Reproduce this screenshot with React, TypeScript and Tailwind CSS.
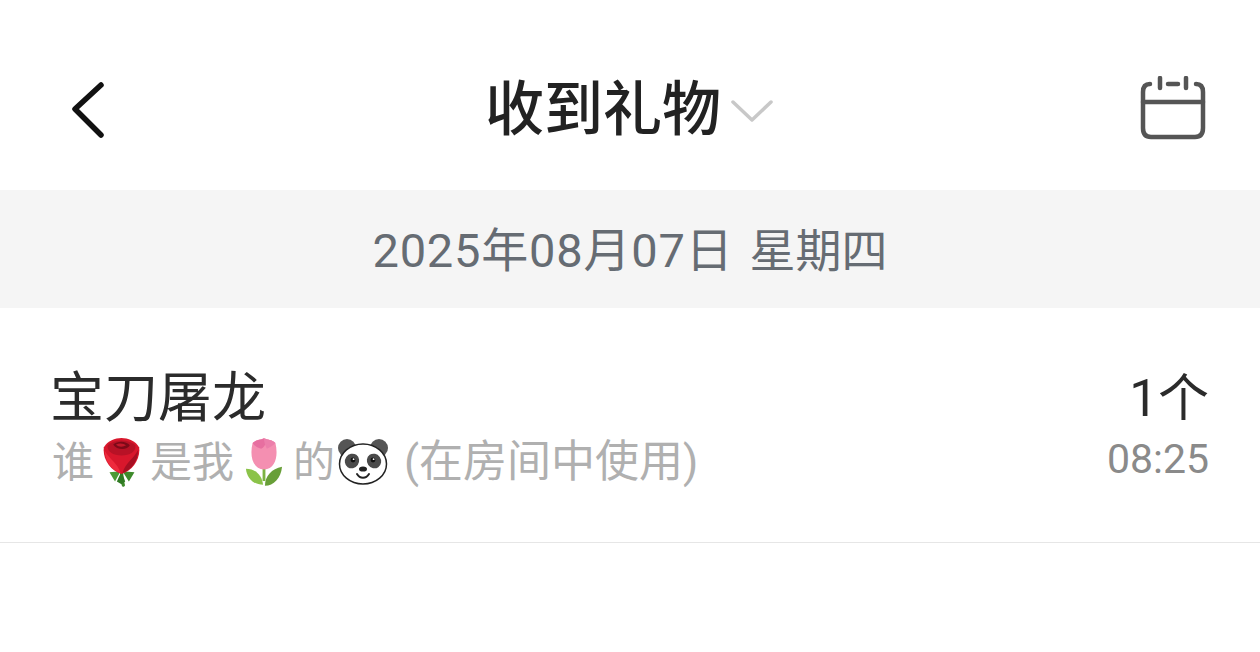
const font = { fontFamily: '"Roboto", "Noto Sans CJK SC", sans-serif' };

function Rose() {
  return (
    <svg viewBox="0 0 40 52" className="h-[50px] w-[37px] shrink-0">
      <path d="M20 32 C20 40 20 44 22 51" stroke="#3f8a2c" strokeWidth="3.5" fill="none" strokeLinecap="round" />
      <path d="M19 36 L7 37 L13 47 Z" fill="#4c9a35" />
      <path d="M21 36 L34 37 L28 47 Z" fill="#3d8a2b" />
      <path d="M20 36 L15 47 L20 50 L24 47 Z" fill="#2f7a23" />
      <path d="M1 10 C-1 22 8 36 20 39 C32 36 41 22 39 10 C35 3 27 0 20 0 C13 0 5 3 1 10 Z" fill="#d8172c" />
      <path d="M5 8 C12 1 28 1 35 8 C36 15 29 19 20 19 C11 19 4 15 5 8 Z" fill="#b81226" />
      <path d="M11 7 C16 3 25 3 29 8 C27 13 15 14 11 7 Z" fill="#7d0a18" />
      <path d="M14 7 C18 5 23 6 25 8 C21 10 17 10 14 7 Z" fill="#c2182b" />
      <path d="M2 14 C8 24 16 27 19 38 C10 35 2 25 2 14 Z" fill="#ee2a3d" />
      <path d="M38 13 C32 24 24 27 21 38 C30 35 38 25 38 13 Z" fill="#a60f22" />
    </svg>
  );
}

function Tulip() {
  return (
    <svg viewBox="0 0 40 52" className="h-[50px] w-[38px] shrink-0">
      <path d="M20 28 L20 46" stroke="#7cb342" strokeWidth="3" />
      <path d="M19 50 C10 50 2 44 1 33 C11 33 18 40 19 50 Z" fill="#8bc34a" />
      <path d="M21 51 C30 51 38 43 39 31 C28 33 21 41 21 51 Z" fill="#689f38" />
      <path d="M8 6 C5 18 7 33 20 34 C33 33 35 18 32 6 C28 2 24 3 20 1 C16 3 12 2 8 6 Z" fill="#f48fb1" />
      <path d="M8 6 C12 2 16 3 20 1 C23 6 21 10 17 12 C13 11 10 9 8 6 Z" fill="#e76fa0" />
      <path d="M20 1 C24 3 28 2 32 6 C29 9 26 11 23 12 C21 8 20 5 20 1 Z" fill="#ec7fab" />
    </svg>
  );
}

function Panda() {
  return (
    <svg viewBox="0 0 50 46" className="h-[46px] w-[50px] shrink-0">
      <circle cx="9" cy="9" r="9" fill="#555" />
      <circle cx="41" cy="9" r="9" fill="#555" />
      <ellipse cx="25" cy="25" rx="23.5" ry="20" fill="#fff" stroke="#222" strokeWidth="1.5" />
      <ellipse cx="14" cy="22" rx="7" ry="7.5" fill="#4a4a4a" transform="rotate(35 14 22)" />
      <ellipse cx="36" cy="22" rx="7" ry="7.5" fill="#4a4a4a" transform="rotate(-35 36 22)" />
      <circle cx="15" cy="21" r="2.4" fill="#111" />
      <circle cx="35" cy="21" r="2.4" fill="#111" />
      <circle cx="15.6" cy="20.2" r="0.9" fill="#fff" />
      <circle cx="35.6" cy="20.2" r="0.9" fill="#fff" />
      <ellipse cx="25" cy="30" rx="4" ry="2.6" fill="#222" />
      <path d="M19 35 C22 40 28 40 31 35" stroke="#222" strokeWidth="2" fill="none" strokeLinecap="round" />
    </svg>
  );
}

export default function App() {
  return (
    <div className="h-[652px] w-[1260px] overflow-hidden bg-white" style={font}>
      <header className="relative flex h-[190px] items-center justify-between pl-[71px] pr-[54px] pt-[29px]">
        <svg viewBox="0 0 34 60" className="h-[60px] w-[34px]" fill="none">
          <path d="M30 5 L4 29 L30 55" stroke="#111" strokeWidth="5.5" strokeLinecap="round" strokeLinejoin="round" />
        </svg>
        <div className="absolute left-[485px] top-[72px] flex items-center">
          <span className="text-[59px] font-medium leading-[76px] text-[#222]">收到礼物</span>
          <svg viewBox="0 0 44 24" className="ml-[9px] mt-[2px] h-[24px] w-[44px]" fill="none">
            <path d="M3 3 L22 21 L41 3" stroke="#c8c8c8" strokeWidth="3.5" strokeLinecap="round" strokeLinejoin="round" />
          </svg>
        </div>
        <svg viewBox="0 0 66 64" className="mb-[3px] h-[64px] w-[66px]" fill="none" stroke="#555" strokeLinecap="round">
          <path d="M10 8 C5 8 3 11 3 16 V52 C3 58 6 61 11 61 H55 C60 61 63 58 63 52 V16 C63 11 61 8 56 8" strokeWidth="4.5" />
          <path d="M3 26 H63" strokeWidth="4.5" />
          <path d="M20 2 V12 M46 2 V12 M28 8 H38" strokeWidth="4.5" />
        </svg>
      </header>

      <div className="flex h-[118px] items-center justify-center bg-[#f5f5f5] pt-[5px] text-[47px] tracking-[0.8px] text-[#666c73]">
        <span>
          2025年08月07日
          <span className="ml-[16px] text-[46px] tracking-normal">星期四</span>
        </span>
      </div>

      <div className="flex h-[235px] items-start justify-between border-b border-[#e6e6e6] pl-[50px] pr-[51px] pt-[58px]">
        <div>
          <div className="text-[54px] leading-[66px] text-[#2b2b2b]">宝刀屠龙</div>
          <div className="flex h-[60px] items-center text-[42px] text-[#b0b0b0]">
            <span className="ml-[2px]">谁</span>
            <span className="ml-[9px]"><Rose /></span>
            <span className="ml-[10px]">是我</span>
            <span className="ml-[11px]"><Tulip /></span>
            <span className="ml-[10px]">的</span>
            <span className="ml-[3px]"><Panda /></span>
            <span className="ml-[16px] text-[44px]">(在房间中使用)</span>
          </div>
        </div>
        <div className="flex flex-col items-end">
          <div className="text-[51px] leading-[66px] text-[#2b2b2b]">1个</div>
          <div className="text-[41px] leading-[54px] text-[#8a8a8a]">08:25</div>
        </div>
      </div>
    </div>
  );
}
